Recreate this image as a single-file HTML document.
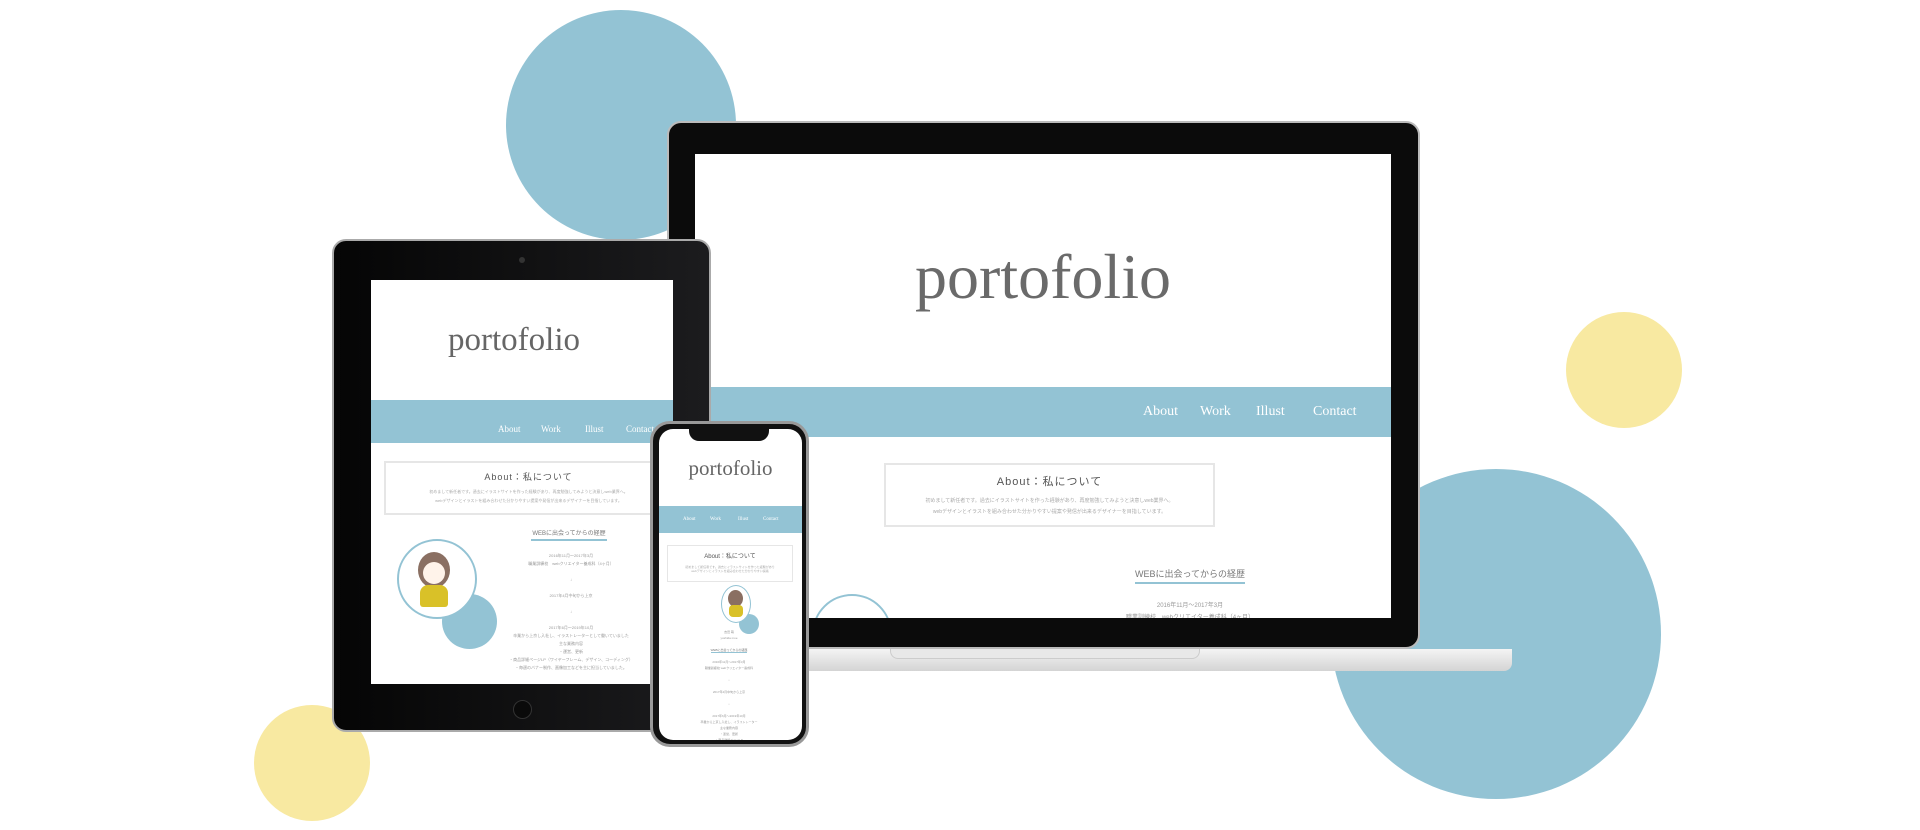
<!DOCTYPE html>
<html><head><meta charset="utf-8"><style>
*{margin:0;padding:0;box-sizing:border-box}
body{width:1920px;height:830px;background:#fff;position:relative;overflow:hidden;font-family:"Liberation Serif","Noto Serif CJK SC",serif}
.a{position:absolute}
.c{position:absolute;border-radius:50%}
.blue{background:#93c3d4}
.yel{background:#f8e9a1}
.t{color:#666;text-align:center;position:absolute;white-space:nowrap}
.nav{position:absolute;background:#93c3d4;color:#fff}
.box{position:absolute;border:2px solid #e6e6e6;background:#fff;text-align:center;color:#555;font-family:"Liberation Sans","Noto Sans CJK JP",sans-serif}
.small{color:#999;font-family:"Liberation Sans","Noto Sans CJK JP",sans-serif;text-align:center;position:absolute;white-space:nowrap}
</style></head><body>
<div class="c blue" style="left:506px;top:10px;width:230px;height:230px"></div>
<div class="c blue" style="left:1331px;top:469px;width:330px;height:330px"></div>
<div class="c yel" style="left:1566px;top:312px;width:116px;height:116px"></div>
<div class="c yel" style="left:254px;top:705px;width:116px;height:116px"></div>

<div class="a" style="left:760px;top:649px;width:752px;height:22px;background:linear-gradient(#f4f4f4,#d4d4d4);border-radius:0 0 8px 8px"></div>
<div class="a" style="left:890px;top:649px;width:310px;height:10px;background:#e8e8e8;border-radius:0 0 8px 8px;border:1px solid #ccc;border-top:none"></div>
<div class="a" style="left:667px;top:121px;width:753px;height:528px;background:#0b0b0b;border-radius:14px;border:2px solid #bbb"></div>
<div class="a" style="left:695px;top:154px;width:696px;height:464px;background:#fff;overflow:hidden">
  <div class="t" style="left:0;width:696px;top:86px;font-size:64px;color:#6a6a6a;letter-spacing:0px">portofolio</div>
  <div class="nav" style="left:0;top:233px;width:696px;height:50px;font-size:14px">
    <span class="a" style="left:448px;top:17px">About</span><span class="a" style="left:505px;top:17px">Work</span><span class="a" style="left:561px;top:17px">Illust</span><span class="a" style="left:618px;top:17px">Contact</span>
  </div>
  <div class="box" style="left:189px;top:309px;width:331px;height:64px">
    <div style="font-size:11px;margin-top:8px;letter-spacing:1px">About：私について</div>
    <div style="font-size:5px;color:#aaa;margin-top:8px">初めまして新任者です。過去にイラストサイトを作った経験があり、再度勉強してみようと決意しweb業界へ。</div>
    <div style="font-size:5px;color:#aaa;margin-top:4px">webデザインとイラストを組み合わせた分かりやすい提案や発信が出来るデザイナーを目指しています。</div>
  </div>
  <div class="small" style="left:440px;top:413px;width:110px;font-size:9px;color:#777;border-bottom:2px solid #93c3d4;padding-bottom:2px">WEBに出会ってからの経歴</div>
  <div class="small" style="left:420px;top:446px;width:150px;font-size:6px">2016年11月～2017年3月</div>
  <div class="small" style="left:400px;top:458px;width:190px;font-size:6px">職業訓練校　webクリエイター養成科（4ヶ月）</div>
  <div class="c" style="left:117px;top:440px;width:80px;height:80px;border:2px solid #93c3d4"></div>
</div>

<div class="a" style="left:332px;top:239px;width:379px;height:493px;background:linear-gradient(90deg,#050505,#1c1c1e);border-radius:14px;border:2px solid #aaa"></div>
<div class="c" style="left:519px;top:257px;width:6px;height:6px;background:#333"></div>
<div class="c" style="left:513px;top:700px;width:19px;height:19px;border:1px solid #333;background:#0a0a0a"></div>
<div class="a" style="left:371px;top:280px;width:302px;height:404px;background:#fff;overflow:hidden">
  <div class="t" style="left:0;width:286px;top:42px;font-size:33px">portofolio</div>
  <div class="nav" style="left:0;top:120px;width:302px;height:43px;font-size:9px">
    <span class="a" style="left:127px;top:24px">About</span><span class="a" style="left:170px;top:24px">Work</span><span class="a" style="left:214px;top:24px">Illust</span><span class="a" style="left:255px;top:24px">Contact</span>
  </div>
  <div class="box" style="left:13px;top:181px;width:289px;height:54px">
    <div style="font-size:9px;margin-top:7px;letter-spacing:1px">About：私について</div>
    <div style="font-size:4px;color:#aaa;margin-top:6px">初めまして新任者です。過去にイラストサイトを作った経験があり、再度勉強してみようと決意しweb業界へ。</div>
    <div style="font-size:4px;color:#aaa;margin-top:3px">webデザインとイラストを組み合わせた分かりやすい提案や発信が出来るデザイナーを目指しています。</div>
  </div>
  <div class="c blue" style="left:71px;top:314px;width:55px;height:55px"></div>
  <div class="c" style="left:26px;top:259px;width:80px;height:80px;border:2px solid #93c3d4;background:#fff"></div>
  <div class="c" style="left:47px;top:272px;width:32px;height:36px;background:#8a6f62"></div>
  <div class="c" style="left:52px;top:282px;width:22px;height:22px;background:#fff3ea"></div>
  <div class="a" style="left:49px;top:305px;width:28px;height:22px;background:#d9c128;border-radius:8px 8px 3px 3px"></div>
  <div class="small" style="left:160px;top:248px;width:76px;font-size:6px;color:#777;border-bottom:2px solid #93c3d4;padding-bottom:2px">WEBに出会ってからの経歴</div>
  <div class="small" style="left:110px;top:272px;width:180px;font-size:4px;line-height:8px">2016年11月～2017年3月<br>職業訓練校　webクリエイター養成科（4ヶ月）<br><br>↓<br><br>2017年4月中旬から上京<br><br>↓<br><br>2017年6月～2019年10月<br>卒業から上京し入社し、イラストレーターとして働いていました<br>主な業務内容<br>・運営、更新<br>・商品詳細ページLP（ワイヤーフレーム、デザイン、コーディング）<br>・毎週のバナー制作、画像加工などを主に担当していました。</div>
</div>

<div class="a" style="left:650px;top:421px;width:159px;height:326px;background:#111;border-radius:20px;border:3px solid #999"></div>
<div class="a" style="left:659px;top:429px;width:143px;height:311px;background:#fff;border-radius:14px;overflow:hidden">
  <div class="a" style="left:30px;top:0;width:80px;height:12px;background:#111;border-radius:0 0 10px 10px"></div>
  <div class="t" style="left:0;width:143px;top:27px;font-size:21px">portofolio</div>
  <div class="nav" style="left:0;top:77px;width:143px;height:27px;font-size:5px">
    <span class="a" style="left:24px;top:11px">About</span><span class="a" style="left:51px;top:11px">Work</span><span class="a" style="left:79px;top:11px">Illust</span><span class="a" style="left:104px;top:11px">Contact</span>
  </div>
  <div class="box" style="left:8px;top:116px;width:126px;height:37px;border-width:1px">
    <div style="font-size:6px;margin-top:5px">About：私について</div>
    <div style="font-size:3px;color:#aaa;margin-top:5px">初めまして新任者です。過去にイラストサイトを作った経験があり</div>
    <div style="font-size:3px;color:#aaa">webデザインとイラストを組み合わせた分かりやすい提案</div>
  </div>
  <div class="c blue" style="left:80px;top:185px;width:20px;height:20px"></div>
  <div class="c" style="left:62px;top:156px;width:30px;height:38px;border:1px solid #93c3d4;background:#fff"></div>
  <div class="c" style="left:69px;top:161px;width:15px;height:17px;background:#8a6f62"></div>
  <div class="a" style="left:70px;top:176px;width:14px;height:12px;background:#d9c128;border-radius:4px"></div>
  <div class="small" style="left:20px;top:200px;width:100px;font-size:3px;line-height:6px">吉田 萌<br>yoshida moe<br><br><span style="color:#777;border-bottom:1px solid #93c3d4">WEBに出会ってからの経歴</span><br><br>2016年11月～2017年3月<br>職業訓練校 webクリエイター養成科<br><br>↓<br><br>2017年4月中旬から上京<br><br>↓<br><br>2017年6月～2019年10月<br>卒業から上京し入社し、イラストレーター<br>主な業務内容<br>・運営、更新<br>・商品詳細ページLP<br>・毎週のバナー制作</div>
</div>
</body></html>
